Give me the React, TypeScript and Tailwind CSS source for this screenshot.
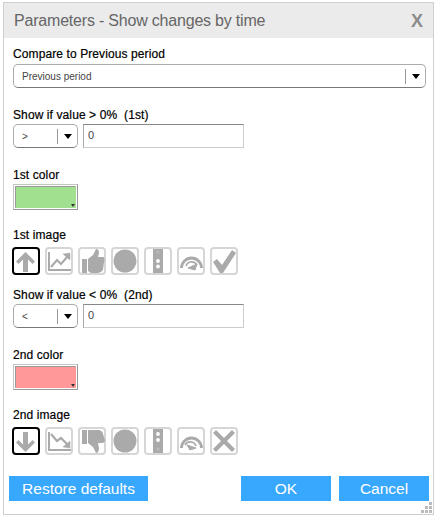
const G = "#aaaaaa";

function IconBox({ selected, children }: { selected?: boolean; children: React.ReactNode }) {
  return (
    <div className={selected ? "w-[28px] h-[28px] rounded-[4px] border-2 border-black flex items-center justify-center" : "w-[28px] h-[28px] rounded-[4px] border-2 border-[#d6d6d6] flex items-center justify-center"}>
      <svg width="28" height="28" viewBox="0 0 28 28" className="shrink-0">{children}</svg>
    </div>
  );
}

const Up = () => <path d="M13.5 5 L23 14.5 L20.5 17 L16 12.5 V25 H11 V12.5 L6.5 17 L4 14.5 Z" fill={G} />;
const Down = () => <path d="M13.5 25 L23 15.5 L20.5 13 L16 17.5 V5 H11 V17.5 L6.5 13 L4 15.5 Z" fill={G} />;
const ChartUp = () => (
  <g fill="none" stroke={G}>
    <path d="M4 5 V23 H26" strokeWidth="2" />
    <path d="M6 20 L12 13 L16 17 L23 9" strokeWidth="2.2" />
    <path d="M18 7 L25 6 L25 13 Z" fill={G} strokeWidth="0.5" />
  </g>
);
const ChartDown = () => (
  <g fill="none" stroke={G}>
    <path d="M4 5 V23 H26" strokeWidth="2" />
    <path d="M6 7 L12 14 L16 11 L23 18" strokeWidth="2.2" />
    <path d="M18 20 L25 21 L25 14 Z" fill={G} strokeWidth="0.5" />
  </g>
);
const ThumbUp = () => (
  <g fill={G}>
    <rect x="4" y="12" width="5" height="14" />
    <path d="M10 12 L15 8 L18 2 Q21 2 21 6 L20 10 H26 Q27 13 26 15 L25 23 Q23 26 20 26 H13 L10 24 Z" />
  </g>
);
const ThumbDown = () => (
  <g fill={G}>
    <rect x="4" y="3" width="5" height="14" />
    <path d="M10 3 H21 Q25 4 25 7 L27 13 Q27 16 24 16 H20 L21 21 Q21 26 18 26 L15 20 L10 16 Z" />
  </g>
);
const Circle = () => <circle cx="14" cy="14" r="11.5" fill={G} />;
const LightUp = () => (
  <g>
    <rect x="9" y="2" width="10" height="24" fill={G} />
    <circle cx="14" cy="5" r="1.8" fill="#b8b8b8" />
    <circle cx="14" cy="14" r="1.9" fill="#fff" />
    <circle cx="14" cy="19.5" r="1.9" fill="#fff" />
  </g>
);
const LightDown = () => (
  <g>
    <rect x="9" y="2" width="10" height="24" fill={G} />
    <circle cx="14" cy="7" r="1.9" fill="#fff" />
    <circle cx="14" cy="13" r="1.9" fill="#fff" />
    <circle cx="14" cy="22" r="1.8" fill="#b8b8b8" />
  </g>
);
const GaugeUp = () => (
  <g fill="none" stroke={G}>
    <path d="M4.5 21 A10 10 0 0 1 24.5 21" strokeWidth="2.8" />
    <path d="M9 19 A6 6 0 0 1 20 18" strokeWidth="1.6" />
    <path d="M11 21 L20 17 L18 23 Z" fill={G} strokeWidth="1" />
  </g>
);
const GaugeDown = () => (
  <g fill="none" stroke={G}>
    <path d="M4.5 21 A10 10 0 0 1 24.5 21" strokeWidth="2.8" />
    <path d="M8 18 A6 6 0 0 1 19 19" strokeWidth="1.6" />
    <path d="M19 21 L10 18 L13 23 Z" fill={G} strokeWidth="1" />
  </g>
);
const Check = () => <path d="M3 15 L7 12 L12 18 L22 3 L26 6 L13 26 H10 Z" fill={G} />;
const Cross = () => <path d="M3 6 L6 3 L14 11 L22 3 L25 6 L17 14 L25 22 L22 25 L14 17 L6 25 L3 22 L11 14 Z" fill={G} />;

function Arrow() {
  return <span className="w-0 h-0 border-l-[4px] border-r-[4px] border-t-[5px] border-l-transparent border-r-transparent border-t-black" />;
}

function Select({ text, wide }: { text: string; wide?: boolean }) {
  return (
    <div className={wide ? "w-[413px] h-[24px] rounded-[5px] border border-[#ababab] border-b-[#777] flex items-center" : "w-[65px] h-[24px] rounded-[5px] border border-[#ababab] border-b-[#777] flex items-center"}>
      <span className="flex-1 pl-[8px] text-[10px] text-[#444] whitespace-pre">{text}</span>
      <span className="w-px h-[15px] bg-[#999]" />
      <span className="w-[19px] flex justify-center"><Arrow /></span>
    </div>
  );
}

function Label({ children }: { children: React.ReactNode }) {
  return <div className="h-[14px] leading-[14px] text-[12px] text-black whitespace-pre tracking-[0.1px] [-webkit-text-stroke:0.2px_#000]">{children}</div>;
}

function Swatch({ color }: { color: string }) {
  return (
    <div className="relative w-[65px] h-[26px] border border-[#c4c4c4] border-b-[#999] border-r-[#999] p-[1px]">
      <div className={color === "g" ? "w-full h-full bg-[#a1e08e] border border-[#9a9a9a] border-b-transparent border-r-transparent" : "w-full h-full bg-[#ff9999] border border-[#9a9a9a] border-b-transparent border-r-transparent"} />
      <span className="absolute right-[2px] bottom-[2px] w-0 h-0 border-l-[2px] border-r-[2px] border-t-[3px] border-l-transparent border-r-transparent border-t-[#333]" />
    </div>
  );
}

function Row({ text, op }: { text: string; op: string }) {
  return (
    <div>
      <Label>{text}</Label>
      <div className="flex gap-[5px] mt-[2px]">
        <Select text={op} />
        <div className="w-[161px] h-[24px] border border-[#ccc] border-t-[#888] border-l-[#aaa] pl-[4px] text-[11px] text-[#444] leading-[20px]">0</div>
      </div>
    </div>
  );
}

function Icons({ items }: { items: React.ReactNode[] }) {
  return (
    <div className="flex gap-[5px] mt-[5px] -ml-px">
      {items.map((it, i) => <IconBox key={i} selected={i === 0}>{it}</IconBox>)}
    </div>
  );
}

const Btn = ({ w, children }: { w: string; children: React.ReactNode }) => (
  <div className={`${w} h-[25px] bg-[#38a8ff] text-white text-[15.5px] flex items-center justify-center`}>{children}</div>
);

export default function App() {
  return (
    <div className="w-[438px] h-[520px] bg-white pt-[2px] pl-[3px] font-['Liberation_Sans',Arial,sans-serif]">
      <div className="relative w-[431px] h-[513px] border border-[#cfcfcf] bg-white">
        <div className="h-[35px] bg-[#ebebeb] flex items-center justify-between pl-[10px] pr-[10px]">
          <span className="text-[16px] text-[#666] tracking-[-0.2px]">Parameters - Show changes by time</span>
          <span className="text-[#8c8c8c] text-[18px] font-bold leading-none">X</span>
        </div>
        <div className="pl-[9px] pt-[9px]">
          <Label>Compare to Previous period</Label>
          <div className="mt-[3px]"><Select text="Previous period" wide /></div>
          <div className="mt-[20px]"><Row text="Show if value > 0%  (1st)" op=">" /></div>
          <div className="mt-[20px]"><Label>1st color</Label></div>
          <div className="mt-[2px]"><Swatch color="g" /></div>
          <div className="mt-[18px]"><Label>1st image</Label></div>
          <Icons items={[<Up />, <ChartUp />, <ThumbUp />, <Circle />, <LightUp />, <GaugeUp />, <Check />]} />
          <div className="mt-[13px]"><Row text="Show if value < 0%  (2nd)" op="<" /></div>
          <div className="mt-[20px]"><Label>2nd color</Label></div>
          <div className="mt-[2px]"><Swatch color="r" /></div>
          <div className="mt-[18px]"><Label>2nd image</Label></div>
          <Icons items={[<Down />, <ChartDown />, <ThumbDown />, <Circle />, <LightDown />, <GaugeDown />, <Cross />]} />
          <div className="flex mt-[21px] -ml-[4px]">
            <Btn w="w-[139px]">Restore defaults</Btn>
            <div className="ml-[93px]"><Btn w="w-[90px]">OK</Btn></div>
            <div className="ml-[8px]"><Btn w="w-[90px]">Cancel</Btn></div>
          </div>
        </div>
        <div className="absolute right-[1px] bottom-[1px] grid grid-cols-3 gap-[1px] w-[11px]">
          <span /><span /><span className="w-[3px] h-[3px] bg-[#bbb]" />
          <span /><span className="w-[3px] h-[3px] bg-[#bbb]" /><span className="w-[3px] h-[3px] bg-[#bbb]" />
          <span className="w-[3px] h-[3px] bg-[#bbb]" /><span className="w-[3px] h-[3px] bg-[#bbb]" /><span className="w-[3px] h-[3px] bg-[#bbb]" />
        </div>
      </div>
    </div>
  );
}
